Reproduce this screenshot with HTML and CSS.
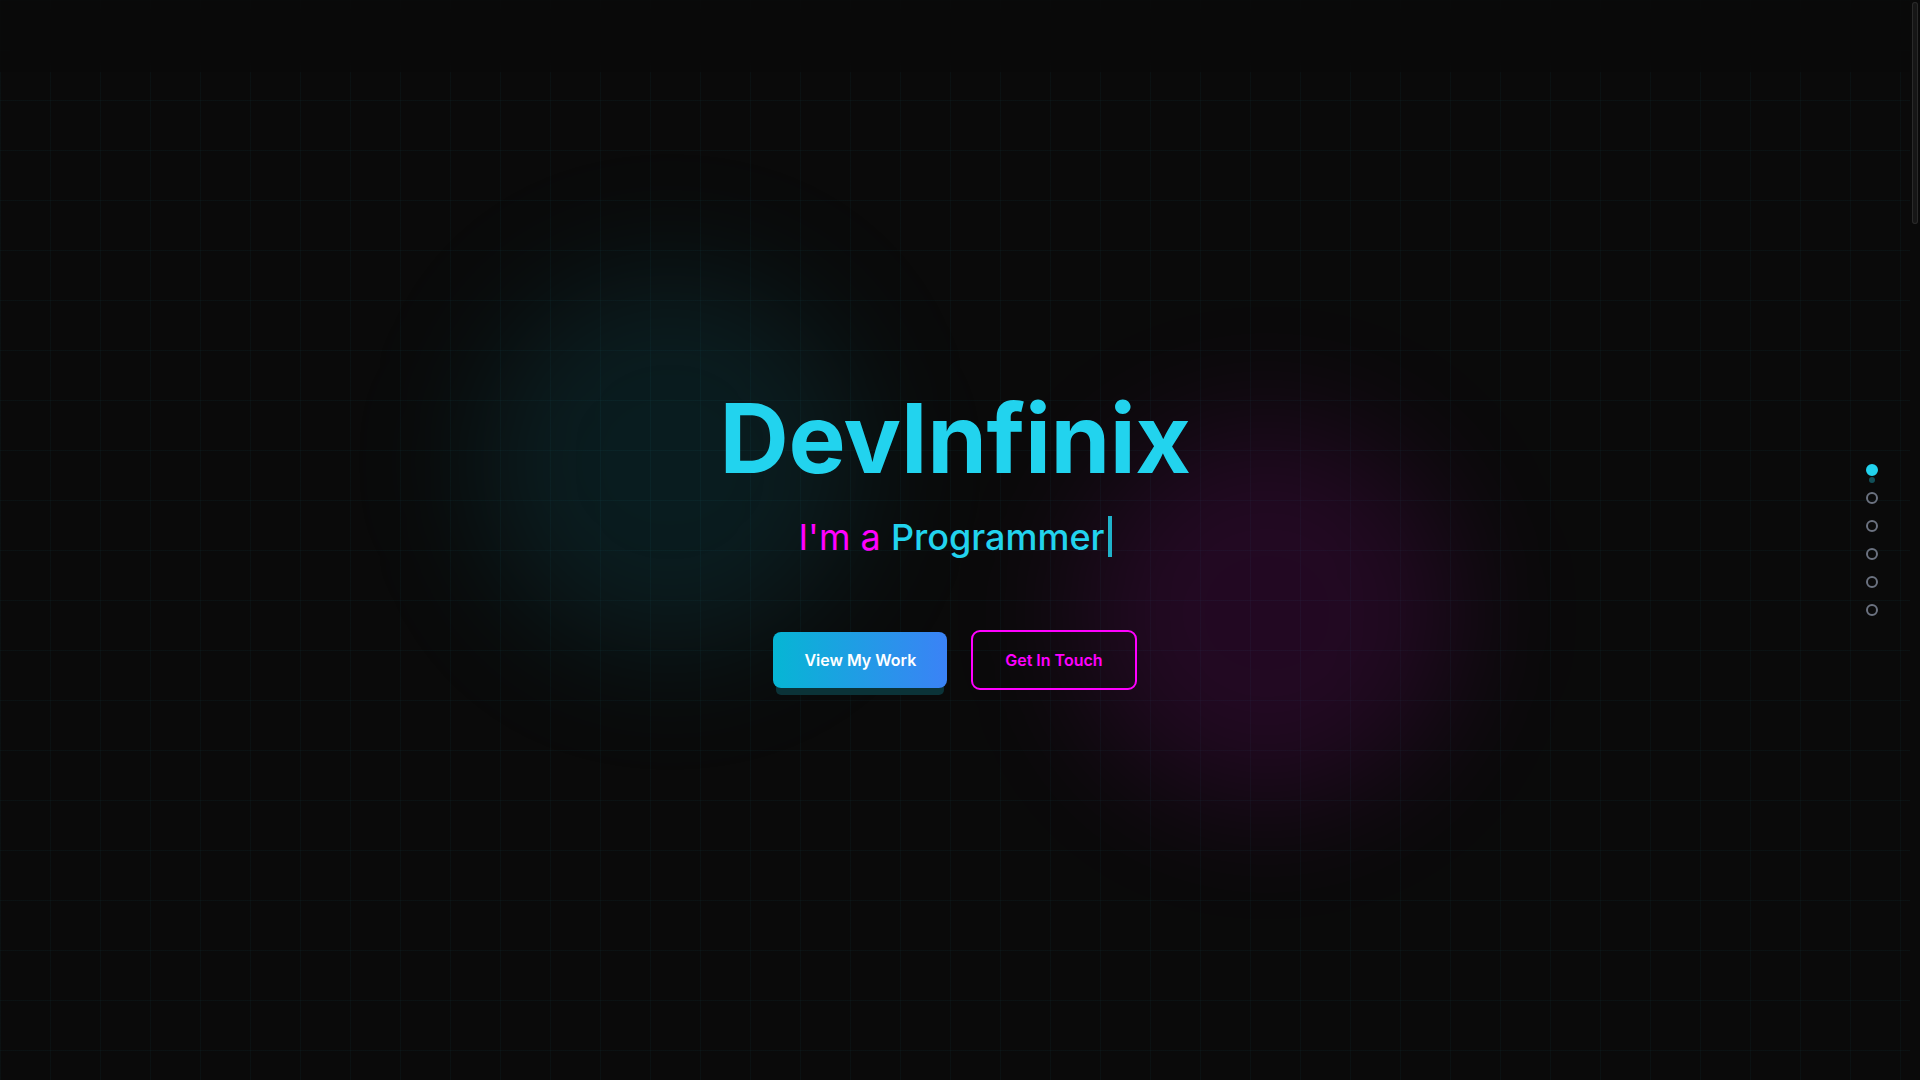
FILE: index.html
```html
<!DOCTYPE html>
<html lang="en">
<head>
<meta charset="utf-8">
<title>DevInfinix</title>
<link rel="stylesheet" href="styles.css">
</head>
<body>
<header class="topbar"></header>

<nav class="dots" aria-label="Sections">
  <a class="dot active" href="#home"></a>
  <a class="dot" href="#about"></a>
  <a class="dot" href="#skills"></a>
  <a class="dot" href="#projects"></a>
  <a class="dot" href="#experience"></a>
  <a class="dot" href="#contact"></a>
</nav>

<div class="scrollbar" aria-hidden="true"><div class="thumb"></div></div>

<main>
  <section class="hero" id="home">
    <div class="grid"></div>
    <div class="blob blob-cyan"></div>
    <div class="blob blob-magenta"></div>
    <div class="hero-content">
      <h1 class="title">DevInfinix</h1>
      <p class="subtitle"><span class="lead">I'm a </span><span class="role">Programmer</span><span class="caret"></span></p>
      <div class="actions">
        <a class="btn btn-primary" href="#projects">View My Work</a>
        <a class="btn btn-outline" href="#contact">Get In Touch</a>
      </div>
    </div>
  </section>
  <section class="section" id="about"></section>
  <section class="section" id="skills"></section>
  <section class="section" id="projects"></section>
  <section class="section" id="experience"></section>
  <section class="section" id="contact"></section>
</main>
</body>
</html>
```

FILE: styles.css
```css
* { box-sizing: border-box; }

html, body {
  margin: 0;
  padding: 0;
  background: #0a0a0a;
  color: #e5e7eb;
  font-family: "Inter", "Noto Sans", "Liberation Sans", sans-serif;
}

body {
  padding-right: 10px;
}

::-webkit-scrollbar { width: 0; height: 0; }

.scrollbar {
  position: fixed;
  top: 0;
  right: 0;
  width: 10px;
  height: 100vh;
  z-index: 40;
  background: #0a0a0a;
}

.thumb {
  margin: 2px 0 0 2px;
  width: 6px;
  height: 222px;
  border-radius: 3px;
  background: #161616;
  box-shadow: inset 0 0 0 1px #2a2a2a;
}

.topbar {
  position: fixed;
  top: 0;
  left: 0;
  right: 10px;
  height: 72px;
  z-index: 20;
  background: rgba(10, 10, 10, 0.75);
  backdrop-filter: blur(12px);
}

.hero {
  position: relative;
  height: 100vh;
  overflow: hidden;
  display: flex;
  align-items: center;
  justify-content: center;
}

.grid {
  position: absolute;
  inset: 0;
  background-image:
    linear-gradient(rgba(34, 211, 238, 0.035) 1px, transparent 1px),
    linear-gradient(90deg, rgba(34, 211, 238, 0.035) 1px, transparent 1px);
  background-size: 50px 50px;
}

.blob {
  position: absolute;
  width: 384px;
  height: 384px;
  border-radius: 50%;
  filter: blur(64px);
}

.blob-cyan {
  top: 25%;
  left: 25%;
  background: rgba(6, 182, 212, 0.11);
}

.blob-magenta {
  bottom: 25.5%;
  right: 23.6%;
  background: rgba(255, 0, 255, 0.1);
}

.hero-content {
  position: relative;
  z-index: 2;
  display: flex;
  flex-direction: column;
  align-items: center;
  text-align: center;
}

.title {
  margin: 0 0 30px;
  font-size: 96px;
  line-height: 96px;
  font-weight: 700;
  color: #22d3ee;
  letter-spacing: -0.5px;
}

.subtitle {
  margin: 0 0 73px;
  font-size: 36px;
  line-height: 40px;
  display: flex;
  align-items: center;
}

.lead {
  color: #ff00ff;
  font-weight: 400;
  white-space: pre;
}

.role {
  color: #22d3ee;
  font-weight: 500;
}

.caret {
  display: inline-block;
  width: 4px;
  height: 41px;
  margin-left: 3px;
  background: #1fb3cb;
}

.actions {
  display: flex;
  align-items: center;
  gap: 24px;
}

.btn {
  display: inline-block;
  font-size: 16px;
  line-height: 24px;
  font-weight: 600;
  text-decoration: none;
  border-radius: 8px;
}

.btn-primary {
  padding: 16px 31px;
  color: #ffffff;
  background: linear-gradient(90deg, #06b6d4, #3b82f6);
  box-shadow: 0 10px 0 -3px #0b3338;
}

.btn-outline {
  padding: 16px 32px;
  color: #ff00ff;
  border: 2px solid #ff00ff;
  border-radius: 9px;
  background: transparent;
}

.dots {
  position: fixed;
  right: 42px;
  top: 50%;
  transform: translateY(-50%);
  z-index: 30;
  display: flex;
  flex-direction: column;
  gap: 16px;
}

.dot {
  position: relative;
  display: block;
  width: 12px;
  height: 12px;
  border-radius: 50%;
  border: 2px solid #6b7280;
}

.dot.active {
  border-color: #22d3ee;
  background: #22d3ee;
}

.dot.active::after {
  content: "";
  position: absolute;
  left: 1px;
  top: 11px;
  width: 6px;
  height: 6px;
  border-radius: 50%;
  background: rgba(34, 211, 238, 0.35);
}

.section {
  height: 835px;
}
```
